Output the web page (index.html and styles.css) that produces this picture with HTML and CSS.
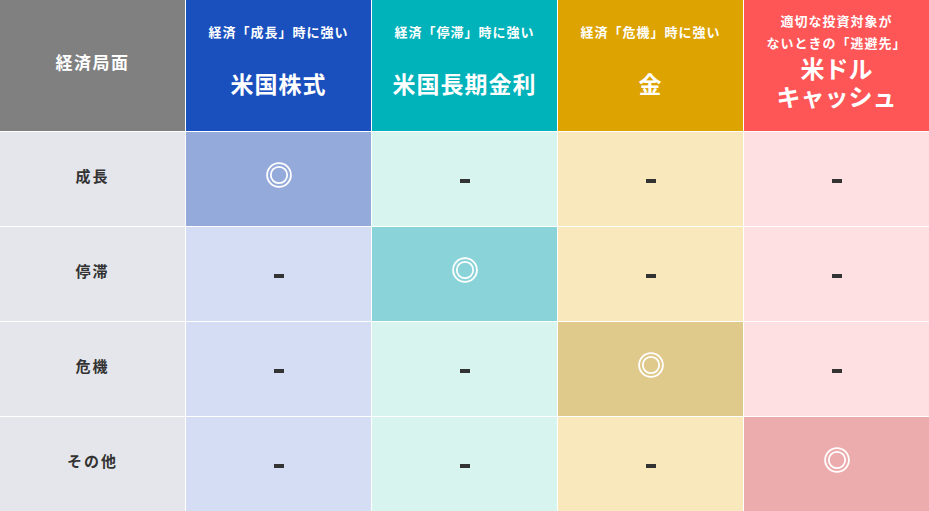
FILE: index.html
```html
<!DOCTYPE html>
<html lang="ja">
<head>
<meta charset="utf-8">
<link rel="stylesheet" href="styles.css">
</head>
<body>
<div class="table">
  <div class="hcell h-phase"><span class="phase">経済局面</span></div>
  <div class="hcell h-blue"><span class="sub">経済「成長」時に強い</span><span class="main">米国株式</span></div>
  <div class="hcell h-cyan"><span class="sub">経済「停滞」時に強い</span><span class="main">米国長期金利</span></div>
  <div class="hcell h-gold"><span class="sub">経済「危機」時に強い</span><span class="main">金</span></div>
  <div class="hcell h-red">
    <span class="sub">適切な投資対象が</span>
    <span class="sub">ないときの「逃避先」</span>
    <span class="main first">米ドル</span>
    <span class="main">キャッシュ</span>
  </div>

  <div class="cell label">成長</div>
  <div class="cell blue-hi"><svg class="circ" width="26" height="26" viewBox="0 0 26 26"><circle cx="13" cy="13" r="11.9" /><circle cx="13" cy="13" r="8.2" /></svg></div>
  <div class="cell cyan"><span class="dash"></span></div>
  <div class="cell gold"><span class="dash"></span></div>
  <div class="cell red"><span class="dash"></span></div>

  <div class="cell label">停滞</div>
  <div class="cell blue"><span class="dash"></span></div>
  <div class="cell cyan-hi"><svg class="circ" width="26" height="26" viewBox="0 0 26 26"><circle cx="13" cy="13" r="11.9" /><circle cx="13" cy="13" r="8.2" /></svg></div>
  <div class="cell gold"><span class="dash"></span></div>
  <div class="cell red"><span class="dash"></span></div>

  <div class="cell label">危機</div>
  <div class="cell blue"><span class="dash"></span></div>
  <div class="cell cyan"><span class="dash"></span></div>
  <div class="cell gold-hi"><svg class="circ" width="26" height="26" viewBox="0 0 26 26"><circle cx="13" cy="13" r="11.9" /><circle cx="13" cy="13" r="8.2" /></svg></div>
  <div class="cell red"><span class="dash"></span></div>

  <div class="cell label">その他</div>
  <div class="cell blue"><span class="dash"></span></div>
  <div class="cell cyan"><span class="dash"></span></div>
  <div class="cell gold"><span class="dash"></span></div>
  <div class="cell red-hi"><svg class="circ" width="26" height="26" viewBox="0 0 26 26"><circle cx="13" cy="13" r="11.9" /><circle cx="13" cy="13" r="8.2" /></svg></div>
</div>
</body>
</html>
```

FILE: styles.css
```css
html, body {
  margin: 0;
  padding: 0;
  background: #ffffff;
}
body {
  font-family: "Noto Sans CJK JP", "Noto Sans", sans-serif;
}
.table {
  display: grid;
  grid-template-columns: repeat(5, 185px);
  grid-template-rows: 131px repeat(4, 94px);
  gap: 1px;
  width: 929px;
  height: 511px;
  background: #ffffff;
}
.hcell {
  display: flex;
  flex-direction: column;
  align-items: center;
  color: #ffffff;
  text-align: center;
  font-weight: 700;
  padding-top: 21px;
  box-sizing: border-box;
}
.h-phase {
  background: #808080;
  justify-content: center;
  padding-top: 0;
  padding-bottom: 7px;
}
.phase {
  font-size: 17px;
  letter-spacing: 1.5px;
  line-height: 22px;
}
.h-blue { background: #1a4fbe; }
.h-cyan { background: #00b2b9; }
.h-gold { background: #dda300; }
.h-red { background: #fe5556; padding-top: 10px; }
.sub {
  display: block;
  font-size: 13px;
  letter-spacing: 1px;
  line-height: 22px;
  font-weight: 700;
}
.main {
  display: block;
  font-size: 23px;
  letter-spacing: 1px;
  line-height: 28px;
  margin-top: 26px;
}
.h-red .main {
  margin-top: 0;
  font-size: 24px;
  letter-spacing: 0;
}
.cell {
  display: flex;
  align-items: center;
  justify-content: center;
}
.label {
  background: #e5e6eb;
  color: #333333;
  font-size: 15px;
  font-weight: 700;
  letter-spacing: 2px;
  padding-bottom: 8px;
  box-sizing: border-box;
}
.blue { background: #d4ddf4; }
.blue-hi { background: #94aadb; }
.cyan { background: #d8f4ef; }
.cyan-hi { background: #8ad3d9; }
.gold { background: #f9e8bb; }
.gold-hi { background: #dfc98b; }
.red { background: #fee0e2; }
.red-hi { background: #ecabad; }
.dash {
  display: block;
  width: 10px;
  height: 4px;
  background: #333333;
  margin-top: 4px;
}
.circ {
  display: block;
  margin-top: -8px;
  fill: none;
  stroke: #ffffff;
  stroke-width: 1.8;
}
```
